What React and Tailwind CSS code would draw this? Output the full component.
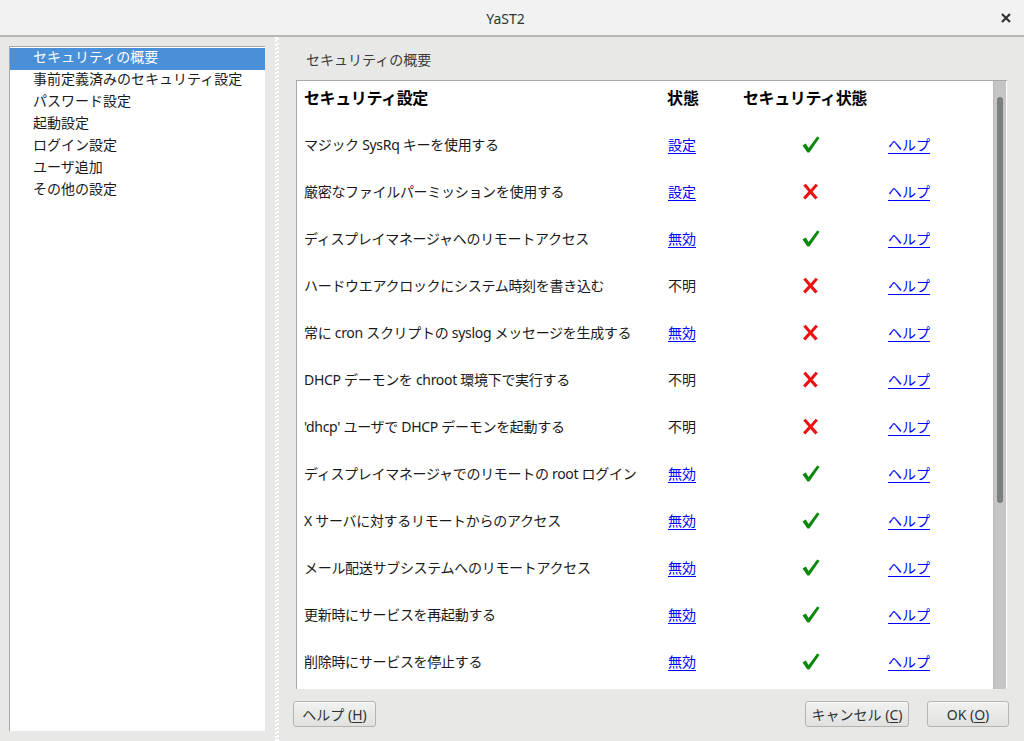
import React from "react";

const FONT = { fontFamily: '"Noto Sans", "Noto Sans CJK JP", sans-serif' };

const rows = [
  ["マジック SysRq キーを使用する", "設定", true, true],
  ["厳密なファイルパーミッションを使用する", "設定", true, false],
  ["ディスプレイマネージャへのリモートアクセス", "無効", true, true],
  ["ハードウエアクロックにシステム時刻を書き込む", "不明", false, false],
  ["常に cron スクリプトの syslog メッセージを生成する", "無効", true, false],
  ["DHCP デーモンを chroot 環境下で実行する", "不明", false, false],
  ["'dhcp' ユーザで DHCP デーモンを起動する", "不明", false, false],
  ["ディスプレイマネージャでのリモートの root ログイン", "無効", true, true],
  ["X サーバに対するリモートからのアクセス", "無効", true, true],
  ["メール配送サブシステムへのリモートアクセス", "無効", true, true],
  ["更新時にサービスを再起動する", "無効", true, true],
  ["削除時にサービスを停止する", "無効", true, true],
];

const sideItems = [
  "セキュリティの概要",
  "事前定義済みのセキュリティ設定",
  "パスワード設定",
  "起動設定",
  "ログイン設定",
  "ユーザ追加",
  "その他の設定",
];

function Check() {
  return (
    <svg width="18" height="17" viewBox="0 0 18 17">
      <path d="M0.5 9.5 L3.8 7.6 L6.6 12 L15.2 0.5 L17.6 1.8 L7.4 16.5 L5.4 16.5 Z" fill="#0a8a0a" />
    </svg>
  );
}

function Cross() {
  return (
    <svg width="17" height="17" viewBox="0 0 17 17">
      <path d="M1.2 2.6 L3.8 0.8 L8.6 6.4 L13.6 0.8 L16 2.6 L10.6 8.7 L15.8 14.6 L13.2 16.4 L8.4 11 L3.4 16.5 L1 14.6 L6.4 8.6 Z" fill="#ee1111" />
    </svg>
  );
}

function Btn({ label, mnem, w }) {
  return (
    <button
      className={`h-[26px] ${w} rounded-[3px] border border-[#b4b4b1] bg-gradient-to-b from-[#f1f1f0] to-[#e1e1df] text-[14px] text-[#2e3436] flex items-center justify-center shadow-[inset_0_1px_0_#fafafa]`}
    >
      {label} (<span className="underline underline-offset-2">{mnem}</span>)
    </button>
  );
}

export default function App() {
  return (
    <div className="w-[1024px] h-[741px] flex flex-col bg-[#e8e8e7] overflow-hidden text-[#2e3436]" style={FONT}>
      {/* title bar */}
      <div className="h-[37px] shrink-0 bg-[#f2f2f2] border-b-2 border-[#b6b6b3] flex items-center">
        <div className="flex-1" />
        <div className="text-[14px] text-[#2e3436] pt-px">YaST2</div>
        <div className="flex-1 flex justify-end pr-[13px]">
          <svg width="10" height="10" viewBox="0 0 10 10">
            <path d="M1 1 L9 9 M9 1 L1 9" stroke="#2e3436" strokeWidth="2.2" />
          </svg>
        </div>
      </div>

      {/* body */}
      <div className="flex-1 flex min-h-0">
        {/* sidebar */}
        <div className="ml-[9px] mt-[9px] mb-[10px] w-[256px] bg-white border-t border-l border-[#a8a8a6] pt-px">
          {sideItems.map((s, i) => (
            <div
              key={s}
              className={`h-[22px] pl-[23px] pb-[5px] flex items-center text-[14px] ${
                i === 0 ? "bg-[#4a90d9] text-white" : "text-[#1a1a1a]"
              }`}
            >
              {s}
            </div>
          ))}
        </div>

        {/* divider */}
        <div className="ml-[10px] w-[4px] flex">
          <div className="w-[2px] border-l-2 border-dotted border-white" />
          <div className="w-[2px] mt-px border-l-2 border-dotted border-white" />
        </div>

        {/* right */}
        <div className="flex-1 flex flex-col pl-[17px] pr-[17px] pt-[12px] pb-[14px] min-w-0">
          <div className="h-[20px] pl-[10px] text-[14px] text-[#3c3c3c] flex items-center">セキュリティの概要</div>
          <div className="mt-[11px] h-[609px] bg-white border-t border-l border-[#a8a8a6] flex overflow-hidden">
            <div className="flex-1 min-w-0 overflow-hidden">
              <div className="h-[40px] pb-[6px] pl-[7px] grid grid-cols-[363px_76px_145px_1fr] items-center text-[16px] font-bold text-black">
                <div className="tracking-[-0.4px]">セキュリティ設定</div>
                <div>状態</div>
                <div className="tracking-[-0.4px]">セキュリティ状態</div>
                <div />
              </div>
              {rows.map(([t, st, link, ok]) => (
                <div key={t} className="h-[47px] pl-[7px] grid grid-cols-[364px_75px_145px_1fr] items-center text-[14px] text-[#1a1a1a]">
                  <div className="tracking-[-0.3px]">{t}</div>
                  <div>
                    {link ? (
                      <span className="text-[#0000ff] underline underline-offset-[3px]">{st}</span>
                    ) : (
                      <span>{st}</span>
                    )}
                  </div>
                  <div className="pl-[59px] flex items-center">{ok ? <Check /> : <Cross />}</div>
                  <div>
                    <span className="text-[#0000ff] underline underline-offset-[3px]">ヘルプ</span>
                  </div>
                </div>
              ))}
            </div>
            {/* scrollbar */}
            <div className="w-[13px] shrink-0 bg-[#c4c5c4] border-l border-[#b8b9b8] pt-[16px] flex justify-center">
              <div className="w-[6px] h-[406px] rounded-[3px] bg-[#7b7f7f]" />
            </div>
            <div className="w-px bg-white shrink-0" />
          </div>
          <div className="mt-[12px] -ml-[3px] -mr-[2px] flex items-center">
            <Btn label="ヘルプ" mnem="H" w="w-[83px]" />
            <div className="flex-1" />
            <Btn label="キャンセル" mnem="C" w="w-[104px]" />
            <div className="w-[18px]" />
            <Btn label="OK" mnem="O" w="w-[82px]" />
          </div>
        </div>
      </div>
    </div>
  );
}
